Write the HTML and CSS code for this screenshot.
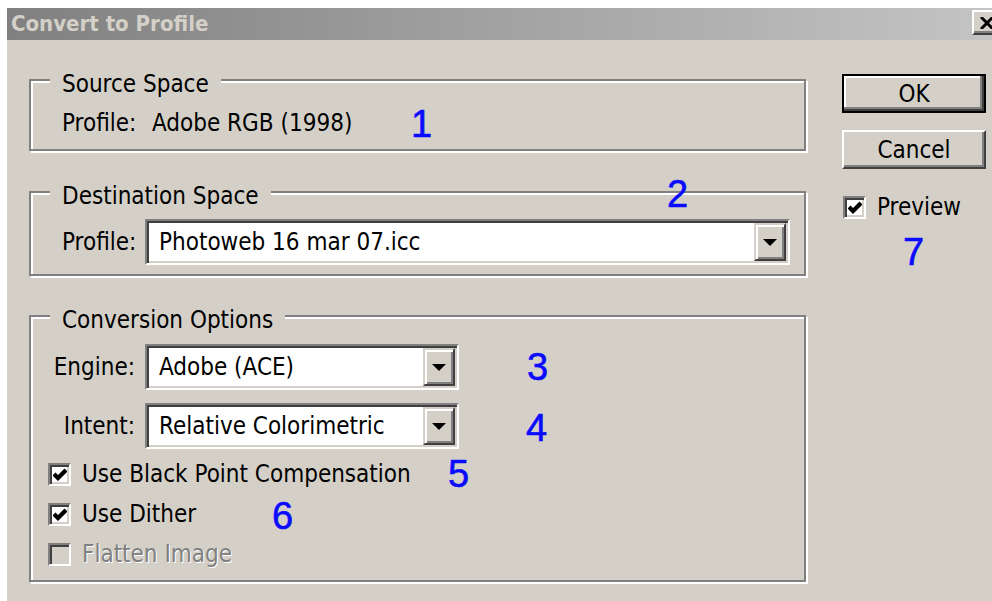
FILE: index.html
```html
<!DOCTYPE html>
<html lang="en">
<head>
<meta charset="utf-8">
<title>Convert to Profile</title>
<link rel="stylesheet" href="styles.css">
</head>
<body>
<div class="window">
  <div class="titlebar">
    <span class="title">Convert to Profile</span>
    <span class="close">
      <svg width="14" height="12" viewBox="0 0 14 12"><path d="M1 0 L13 12 M13 0 L1 12" stroke="#000" stroke-width="3"/></svg>
    </span>
  </div>

  <div class="content">
    <div class="main">
      <div class="group group-source">
        <div class="legend">Source Space</div>
        <div class="row row-source">
          <span class="label">Profile:</span>
          <span class="value">Adobe RGB (1998)</span>
        </div>
      </div>

      <div class="group group-dest">
        <div class="legend">Destination Space</div>
        <div class="row row-dest">
          <span class="label">Profile:</span>
          <div class="select select-wide">
            <span class="select-value">Photoweb 16 mar 07.icc</span>
            <span class="select-btn"><svg width="14" height="7" viewBox="0 0 14 7"><path d="M0 0 H14 L7 7 Z" fill="#000"/></svg></span>
          </div>
        </div>
      </div>

      <div class="group group-conv">
        <div class="legend">Conversion Options</div>
        <div class="field">
          <span class="field-label">Engine:</span>
          <div class="select select-short">
            <span class="select-value">Adobe (ACE)</span>
            <span class="select-btn"><svg width="14" height="7" viewBox="0 0 14 7"><path d="M0 0 H14 L7 7 Z" fill="#000"/></svg></span>
          </div>
        </div>
        <div class="field field-intent">
          <span class="field-label">Intent:</span>
          <div class="select select-short">
            <span class="select-value">Relative Colorimetric</span>
            <span class="select-btn"><svg width="14" height="7" viewBox="0 0 14 7"><path d="M0 0 H14 L7 7 Z" fill="#000"/></svg></span>
          </div>
        </div>
        <div class="checks">
          <div class="check-row">
            <span class="check"><svg width="14" height="14" viewBox="0 0 7 7"><polyline points="0.5,3.5 2.5,5.5 6.5,1.5" fill="none" stroke="#000" stroke-width="2.1"/></svg></span>
            <span>Use Black Point Compensation</span>
          </div>
          <div class="check-row">
            <span class="check"><svg width="14" height="14" viewBox="0 0 7 7"><polyline points="0.5,3.5 2.5,5.5 6.5,1.5" fill="none" stroke="#000" stroke-width="2.1"/></svg></span>
            <span>Use Dither</span>
          </div>
          <div class="check-row is-disabled">
            <span class="check"></span>
            <span>Flatten Image</span>
          </div>
        </div>
      </div>
    </div>

    <div class="side">
      <div class="btn btn-default">OK</div>
      <div class="btn btn-cancel">Cancel</div>
      <div class="check-row preview-row">
        <span class="check"><svg width="14" height="14" viewBox="0 0 7 7"><polyline points="0.5,3.5 2.5,5.5 6.5,1.5" fill="none" stroke="#000" stroke-width="2.1"/></svg></span>
        <span>Preview</span>
      </div>
    </div>
  </div>

  <span class="mark mark-1">1</span>
  <span class="mark mark-2">2</span>
  <span class="mark mark-3">3</span>
  <span class="mark mark-4">4</span>
  <span class="mark mark-5">5</span>
  <span class="mark mark-6">6</span>
  <span class="mark mark-7">7</span>
</div>
</body>
</html>
```

FILE: styles.css
```css
html, body {
  margin: 0;
  padding: 0;
  background: #fff;
}

body {
  font-family: "DejaVu Sans Condensed", "DejaVu Sans", sans-serif;
  font-stretch: condensed;
}

/* dialog frame */
.window {
  position: relative;
  margin: 8px 0 0 7px;
  width: 985px;
  height: 593px;
  background: #d4d0c8;
  overflow: hidden;
  font-size: 24px;
  line-height: 26px;
  color: #000;
}

.titlebar {
  height: 32px;
  display: flex;
  align-items: center;
  padding-left: 4px;
  background: linear-gradient(to right, #808080, #c4c4c4);
  font-size: 22px;
}

.title {
  flex: 1;
  font-weight: bold;
  color: #d4d0c8;
}

.close {
  align-self: flex-start;
  margin-top: 2px;
  margin-right: -10px;
  width: 30px;
  height: 25px;
  box-sizing: border-box;
  background: #d4d0c8;
  border: 2px solid;
  border-color: #fff #404040 #404040 #fff;
  box-shadow: inset -2px -2px 0 #808080;
  display: flex;
  align-items: center;
  justify-content: center;
}

.content {
  display: flex;
  align-items: flex-start;
}

.main {
  margin-left: 22px;
  width: 777px;
}

/* etched group boxes */
.group {
  border: 2px solid #808080;
  box-shadow: inset 2px 2px 0 #fff, 2px 2px 0 #fff;
}

.legend {
  display: table;
  margin: -10px 0 0 19px;
  padding: 0 12px;
  background: #d4d0c8;
}

.group-source {
  margin-top: 39px;
  padding-bottom: 13px;
}

.group-dest {
  margin-top: 40px;
  padding: 0 14px 9px 0;
}

.group-conv {
  margin-top: 39px;
  padding-bottom: 6px;
}

.row {
  display: flex;
  align-items: center;
  margin-left: 31px;
}

.row-source {
  margin-top: 13px;
}

.row-source .label {
  width: 90px;
}

.row-dest {
  margin-top: 10px;
}

.row-dest .label {
  width: 83px;
}

/* drop-down lists */
.select {
  display: flex;
  box-sizing: border-box;
  height: 46px;
  padding: 2px;
  background: #fff;
  border: 2px solid;
  border-color: #808080 #fff #fff #808080;
  box-shadow: inset 2px 2px 0 #404040, inset -2px -2px 0 #d4d0c8;
}

.select-wide {
  flex: 1;
}

.select-short {
  width: 314px;
}

.select-value {
  flex: 1;
  display: flex;
  align-items: center;
  padding-left: 10px;
  white-space: nowrap;
}

.select-btn {
  width: 32px;
  box-sizing: border-box;
  background: #d4d0c8;
  border: 2px solid;
  border-color: #d4d0c8 #404040 #404040 #d4d0c8;
  box-shadow: inset 2px 2px 0 #fff, inset -2px -2px 0 #808080;
  display: flex;
  align-items: center;
  justify-content: center;
}

.field {
  display: flex;
  align-items: center;
  margin-top: 11px;
}

.field-intent {
  margin-top: 13px;
}

.field-label {
  width: 104px;
  margin-right: 10px;
  text-align: right;
}

/* check boxes */
.checks {
  margin-top: 5px;
  padding-left: 17px;
}

.check-row {
  display: flex;
  align-items: center;
  height: 40px;
}

.check {
  width: 23px;
  height: 23px;
  box-sizing: border-box;
  margin-right: 11px;
  background: #fff;
  border: 2px solid;
  border-color: #808080 #fff #fff #808080;
  box-shadow: inset 2px 2px 0 #404040, inset -2px -2px 0 #d4d0c8;
  display: flex;
  align-items: center;
  justify-content: center;
}

.is-disabled {
  color: #808080;
  text-shadow: 1px 1px 0 #fff;
}

.is-disabled .check {
  background: #d4d0c8;
}

/* command buttons */
.side {
  margin-left: 36px;
  padding-top: 34px;
  width: 144px;
}

.btn {
  box-sizing: border-box;
  height: 39px;
  display: flex;
  align-items: center;
  justify-content: center;
  background: #d4d0c8;
}

.btn-default {
  border: 2px solid #000;
  box-shadow: inset -2px -2px 0 #404040, inset -4px -4px 0 #808080, inset 2px 2px 0 #fff;
}

.btn-cancel {
  margin-top: 17px;
  border: 2px solid;
  border-color: #fff #404040 #404040 #fff;
  box-shadow: inset -2px -2px 0 #808080;
}

.preview-row {
  margin-top: 18px;
  margin-left: 1px;
}

/* numbered callouts drawn over the dialog */
.mark {
  position: absolute;
  font-family: "Liberation Sans", Arial, sans-serif;
  font-size: 38px;
  line-height: 38px;
  color: #0a0aff;
  -webkit-text-stroke: 0.6px #0a0aff;
}

.mark-1 { left: 404px; top: 97px; }
.mark-2 { left: 660px; top: 167px; }
.mark-3 { left: 520px; top: 340px; }
.mark-4 { left: 519px; top: 401px; }
.mark-5 { left: 441px; top: 447px; }
.mark-6 { left: 265px; top: 489px; }
.mark-7 { left: 896px; top: 225px; }
```
